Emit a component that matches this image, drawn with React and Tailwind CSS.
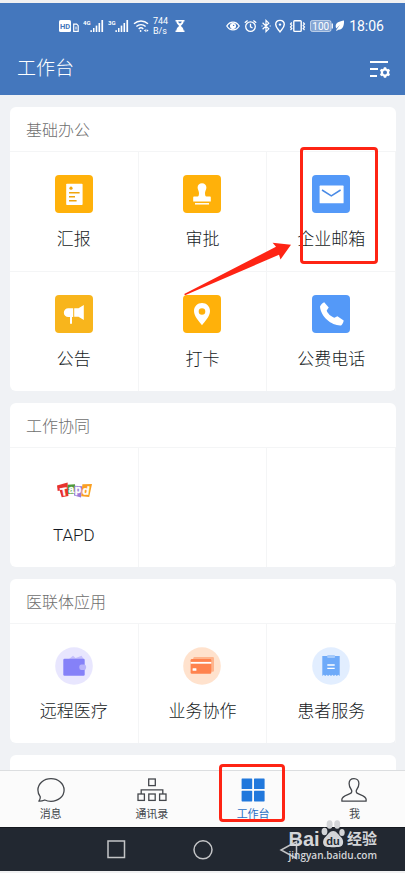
const BASE_APPS = [
  { name: '汇报', icon: ReportIcon },
  { name: '审批', icon: StampIcon },
  { name: '企业邮箱', icon: MailIcon, marked: true },
  { name: '公告', icon: HornIcon },
  { name: '打卡', icon: PinIcon },
  { name: '公费电话', icon: PhoneIcon },
]

const TEAM_APPS = [{ name: 'TAPD', icon: TapdIcon }, null, null]

const MEDICAL_APPS = [
  { name: '远程医疗', icon: WalletIcon },
  { name: '业务协作', icon: CardsIcon },
  { name: '患者服务', icon: ReceiptIcon },
]

const TABS = [
  { name: '消息', icon: ChatIcon },
  { name: '通讯录', icon: ContactsIcon },
  { name: '工作台', icon: GridIcon, active: true },
  { name: '我', icon: MeIcon },
]

function Tile({ color, children }) {
  return (
    <svg viewBox="0 0 38 38" className="size-[38px]" aria-hidden="true">
      <rect width="38" height="38" rx="4" fill={color} />
      {children}
    </svg>
  )
}

function Disc({ color, children }) {
  return (
    <svg viewBox="0 0 38 38" className="size-[38px]" aria-hidden="true">
      <circle cx="19" cy="19" r="18.8" fill={color} />
      {children}
    </svg>
  )
}

function ReportIcon() {
  return (
    <Tile color="#ffb10a">
      <rect x="11.2" y="8.8" width="16.4" height="21.2" rx="0.8" fill="#fff" />
      <circle cx="16" cy="13.2" r="1.6" fill="#f0a50c" />
      <path d="M14 17.8h10.6M14 21.7h6M14 25.7h7.6" stroke="#f0a50c" strokeWidth="1.4" />
    </Tile>
  )
}

function StampIcon() {
  return (
    <Tile color="#ffb10a">
      <path
        d="M19 8.2c-2.6 0-4.4 1.9-4.4 4.3 0 2 1.4 3.6 1.4 5.6 0 1.8-.3 3.5-1.4 3.5h-3.400c-.6 0-1 .4-1 1v3.900h17.600v-3.900c0-.6-.4-1-1-1h-3.400c-1.100 0-1.400-1.700-1.400-3.500 0-2 1.400-3.600 1.400-5.600 0-2.400-1.800-4.300-4.400-4.300z"
        fill="#fff"
      />
      <path d="M12 28.800h14" stroke="#fff" strokeWidth="1.5" />
    </Tile>
  )
}

function MailIcon() {
  return (
    <Tile color="#5499f8">
      <rect x="7.6" y="10.6" width="24" height="17.7" rx="0.6" fill="#fff" />
      <path d="M10 15l9.300 5.800 9.300-5.800" stroke="#4a8be6" strokeWidth="1.5" fill="none" />
    </Tile>
  )
}

function HornIcon() {
  return (
    <Tile color="#f8b51c">
      <path d="M13.200 13.300h5v8.700h-1.200v6.800h-2v-6.800h-1.800a4.350 4.350 0 0 1 0-8.700z" fill="#fff" />
      <path d="M19.200 13.300h4.300l5.300-3.400v15.200l-5.300-3.300h-4.300z" fill="#fff" />
    </Tile>
  )
}

function PinIcon() {
  return (
    <Tile color="#ffb10a">
      <path
        d="M19 8c-4.500 0-8 3.500-8 8 0 5.500 5.300 10.500 8 14.200 2.700-3.700 8-8.700 8-14.200 0-4.500-3.500-8-8-8zm0 5.200a3.300 3.300 0 1 1 0 6.600 3.300 3.300 0 0 1 0-6.600z"
        fill="#fff"
        fillRule="evenodd"
      />
    </Tile>
  )
}

function PhoneIcon() {
  return (
    <Tile color="#5499f8">
      <path
        d="M12.200 7.200l4.500 5.400-2 3c.8 3 4.500 6.300 7.700 7.200l3-1.600 6.300 4.200c-.3 2-1.200 3.800-2.600 5-9 .6-20.300-8.300-21.100-18.900.9-1.800 2.300-3.300 4.200-4.300z"
        fill="#fff"
      />
    </Tile>
  )
}

function TapdIcon() {
  return (
    <svg viewBox="0 0 38 38" className="size-[38px]" aria-hidden="true">
      <path d="M2 14.400l10.600-2.800.8 13.400-6.700 1.300-2-6.800-2 .4z" fill="#e8332c" />
      <path d="M12.600 13.800l7.400-.6.400 9.300-7.200.4z" fill="#4d9a3b" />
      <path d="M19.400 14.800l8 .4-1.400 11.400-7-2z" fill="#9b7ad8" />
      <path d="M27.400 13.200l9.600-.2-2.800 13-8-.8z" fill="#fa9f22" />
      <g
        fill="#fff"
        stroke="#fff"
        strokeWidth="0.4"
        fontFamily="'Liberation Sans', sans-serif"
        fontWeight="700"
        textAnchor="middle"
      >
        <text x="8.7" y="24.400" fontSize="11" transform="rotate(-10 8.7 20)">T</text>
        <text x="16.400" y="21.600" fontSize="10">a</text>
        <text x="23" y="22" fontSize="10.500">p</text>
        <text x="31.200" y="23.600" fontSize="11.500" transform="rotate(8 31 19)">d</text>
      </g>
    </svg>
  )
}

function WalletIcon() {
  return (
    <Disc color="#e8e6fe">
      <path d="M14 12l4-3.200 2.600 2.200 6-2.300 2 3.300z" fill="#c4bffc" />
      <rect x="8.300" y="11.700" width="21.400" height="17" rx="1.200" fill="#8581f8" />
      <rect x="24.300" y="17.600" width="6.800" height="5.400" rx="2.200" fill="#b9b4fb" />
    </Disc>
  )
}

function CardsIcon() {
  return (
    <Disc color="#ffe2cd">
      <rect x="10.300" y="10" width="20.700" height="14.800" rx="1.200" fill="#ffb48c" />
      <rect x="7.600" y="12" width="20.700" height="14.800" rx="1.200" fill="#ff834e" />
      <path d="M7.600 15.800h20.700" stroke="#fff" strokeWidth="1.800" />
      <rect x="9.600" y="21.200" width="3.800" height="2.600" rx="0.400" fill="#fff" />
    </Disc>
  )
}

function ReceiptIcon() {
  return (
    <Disc color="#e2eeff">
      <path
        d="M10.300 9h17.400v20l-1.450-1.200-1.450 1.200-1.450-1.200-1.450 1.200-1.450-1.200-1.450 1.200-1.450-1.200-1.450 1.200-1.450-1.200-1.450 1.200-1.450-1.200-1.450 1.200z"
        fill="#6eaaf9"
      />
      <rect x="15.200" y="8" width="7.800" height="3" rx="0.800" fill="#a5cafb" />
      <path d="M15.300 18h7.400M15.300 21.300h7.400" stroke="#fff" strokeWidth="1.300" />
    </Disc>
  )
}

function ChatIcon() {
  return (
    <svg viewBox="0 0 30 26" className="h-[26px] w-[30px]" fill="none" stroke="currentColor" strokeWidth="1.300">
      <path d="M4.300 19.800C2.700 17.900 1.900 15.600 1.900 13 1.900 6.600 7.700 1.600 15 1.600S28.100 6.600 28.100 13 22.300 24.300 15 24.300c-2.300 0-4.300-.4-6.200-1.300-1.800.8-3.800 1.300-5.900 1.200 1-1.300 1.500-2.800 1.400-4.400z" strokeLinejoin="round" />
    </svg>
  )
}

function ContactsIcon() {
  return (
    <svg viewBox="0 0 30 26" className="h-[26px] w-[30px]" fill="none" stroke="currentColor" strokeWidth="1.300">
      <rect x="11.700" y="2" width="6.600" height="6.600" />
      <path d="M4.200 17v-4.200h21.600V17" />
      <rect x="1" y="17" width="6.400" height="6.400" />
      <rect x="11.800" y="17" width="6.400" height="6.400" />
      <rect x="22.600" y="17" width="6.400" height="6.400" />
    </svg>
  )
}

function GridIcon() {
  return (
    <svg viewBox="0 0 30 26" className="h-[26px] w-[30px]" fill="#2178dc">
      <rect x="3.600" y="1.500" width="10.600" height="10.600" rx="0.600" />
      <rect x="16" y="1.500" width="10.600" height="10.600" rx="0.600" />
      <rect x="3.600" y="13.800" width="10.600" height="10.600" rx="0.600" />
      <rect x="16" y="13.800" width="10.600" height="10.600" rx="0.600" />
    </svg>
  )
}

function MeIcon() {
  return (
    <svg viewBox="0 0 30 26" className="h-[26px] w-[30px]" fill="none" stroke="currentColor" strokeWidth="1.300">
      <path d="M15 1.600c-3 0-4.900 2-4.900 5 0 2.500.8 4.400 2.100 5.900.9 1.100.8 3.200-.7 3.900-3.400 1.700-8.600 2.800-8.600 5.900v1.900h24.200v-1.900c0-3.100-5.200-4.200-8.600-5.900-1.500-.7-1.600-2.800-.7-3.900 1.300-1.500 2.100-3.400 2.100-5.900 0-3-1.900-5-4.900-5z" strokeLinejoin="round" />
    </svg>
  )
}

function Signal({ label }) {
  return (
    <svg viewBox="0 0 21 14" className="h-3.5 w-[21px]" fill="#fff">
      <text x="0" y="5.500" fontSize="6" fontWeight="700" fontFamily="Roboto, sans-serif">{label}</text>
      <rect x="7.400" y="11.200" width="1.500" height="1.800" />
      <rect x="10" y="9" width="1.500" height="4" />
      <rect x="12.700" y="6.600" width="1.600" height="6.400" />
      <rect x="15.500" y="4" width="1.600" height="9" />
      <rect x="18.400" y="1" width="1.700" height="12" />
    </svg>
  )
}

function StatusBar() {
  return (
    <div className="flex h-[46px] items-center justify-between pr-[21px] pl-[59px] text-white">
      <div className="flex items-center gap-1">
        <svg viewBox="0 0 20 14" className="h-3.5 w-5">
          <rect x="0" y="1" width="12" height="12" rx="1.500" fill="#fff" />
          <text x="6" y="9.800" fontSize="7.500" fontWeight="700" textAnchor="middle" fill="#4477bd" fontFamily="Roboto, sans-serif">HD</text>
          <path d="M14.700 5.200h3l1.500 1.500v5.700h-4.500z" fill="none" stroke="#fff" strokeWidth="1.200" />
          <path d="M17 7.500v3" stroke="#fff" strokeWidth="1" />
        </svg>
        <Signal label="4G" />
        <Signal label="3G" />
        <svg viewBox="0 0 16 14" className="h-3.5 w-4" fill="none" stroke="#fff" strokeWidth="1.400">
          <path d="M1 4.800c4-3.700 10-3.700 14 0M3.400 7.400c2.600-2.400 6.600-2.400 9.200 0M5.700 9.900c1.300-1.200 3.300-1.200 4.600 0" />
          <circle cx="7.600" cy="12" r="0.900" fill="#fff" stroke="none" />
          <path d="M10.800 11.600l2-1.300v2.600zM15.600 11.600l-2-1.300v2.600z" fill="#fff" stroke="none" />
        </svg>
        <div className="text-[9px] leading-[10px]">
          <div>744</div>
          <div>B/s</div>
        </div>
        <svg viewBox="0 0 16 14" className="h-3.5 w-4" fill="#fff">
          <path d="M3.500 1h9v1.600h-.9c0 2-1.600 3.400-2.800 4.400 1.200 1 2.800 2.400 2.800 4.400h.9V13h-9v-1.600h.9c0-2 1.600-3.400 2.800-4.400-1.200-1-2.800-2.400-2.800-4.400h-.9z" />
          <path d="M6.200 2.600h3.600c-.2.8-.6 1.300-1 1.700H7.200c-.4-.4-.8-.9-1-1.700z" fill="#4477bd" />
        </svg>
      </div>

      <div className="flex items-center gap-1">
        <svg viewBox="0 0 14 14" className="size-3.5" fill="none" stroke="#fff" strokeWidth="1.300">
          <path d="M.8 7c3-5.200 9.400-5.200 12.400 0-3 5.200-9.400 5.200-12.400 0z" />
          <circle cx="7" cy="7" r="2.400" fill="#fff" />
          <circle cx="7.600" cy="6.400" r="0.700" fill="#4477bd" stroke="none" />
        </svg>
        <svg viewBox="0 0 13 14" className="h-3.5 w-[13px]" fill="none" stroke="#fff" strokeWidth="1.300">
          <circle cx="6.500" cy="7.600" r="4.800" />
          <path d="M6.500 4.800v3l2 1.200M.8 3.800L3.600 1.400M12.200 3.800L9.400 1.400" />
        </svg>
        <svg viewBox="0 0 10 14" className="h-3.5 w-2.5" fill="none" stroke="#fff" strokeWidth="1.200">
          <path d="M1.600 3.800l6.200 6L5 12.600V1.400l2.800 2.800-6.200 6M.4 7h1.200M8.600 7h1.200" />
        </svg>
        <svg viewBox="0 0 10 14" className="h-3.5 w-2.5" fill="none" stroke="#fff" strokeWidth="1.400">
          <path d="M5 1.400c-2.500 0-4.300 1.800-4.300 4.200C.7 8.400 3.500 10.600 5 12.800c1.500-2.200 4.300-4.400 4.300-7.200 0-2.400-1.800-4.200-4.300-4.200z" />
          <circle cx="5" cy="5.600" r="1.200" fill="#fff" stroke="none" />
        </svg>
        <svg viewBox="0 0 17 14" className="h-3.5 w-[17px]" fill="none" stroke="#fff" strokeWidth="1.400">
          <rect x="4.800" y="1.800" width="7.400" height="10.600" rx="0.800" />
          <path d="M2.800 3.500L1.500 5l1.300 1.500L1.500 8l1.300 1.500L1.500 11M14.200 3.500L15.500 5l-1.300 1.500L15.500 8l-1.300 1.500 1.300 1.500" strokeWidth="1.200" />
        </svg>
        <svg viewBox="0 0 35 14" className="h-3.5 w-[35px]">
          <rect x="0.500" y="1.500" width="20.500" height="11" rx="1.800" fill="#fff" fillOpacity="0.350" stroke="#fff" strokeOpacity="0.700" strokeWidth="0.800" />
          <text x="10.800" y="10.900" fontSize="10" textAnchor="middle" fill="#fff" fontFamily="Roboto, sans-serif">100</text>
          <rect x="21.600" y="4.500" width="1.300" height="5" fill="#fff" />
          <path d="M34 1.500c-4.500.7-8.500 2.200-8.300 6 0 .8.300 1.500.7 2.100l3.600-3.800-3.900 5.400.8.800 1-1.300c4.800.6 6.400-4 6.100-9.200z" fill="#fff" />
        </svg>
        <time className="text-[14px] leading-4">18:06</time>
      </div>
    </div>
  )
}

function Header() {
  return (
    <header className="border-t-3 border-[#f1f1f2] bg-[#4477bd]">
      <StatusBar />
      <div className="flex h-[46px] items-center justify-between pr-3.5 pb-1.5 pl-[17px]">
        <h1 className="text-[19px] leading-7 font-light text-white">工作台</h1>
        <button type="button" aria-label="设置">
          <svg viewBox="0 0 22 18" className="h-[18px] w-[22px]" fill="none" stroke="#fff">
            <path d="M1 2h18M1 9h8M1 16h7" strokeWidth="2.200" />
            <circle cx="16" cy="12.500" r="3.100" strokeWidth="2.200" />
            <path
              d="M16 7.300v1.900M16 15.800v1.900M11.500 9.900l1.700 1M18.800 14.100l1.700 1M11.500 15.100l1.700-1M18.800 10.900l1.700-1"
              strokeWidth="2.400"
            />
          </svg>
        </button>
      </div>
    </header>
  )
}

function Section({ title, apps, children }) {
  return (
    <section className="rounded-md bg-white">
      <h2 className="h-11 px-4 pt-3 text-[16px] leading-6 font-light text-[#6e6e6e]">{title}</h2>
      <div className="relative grid grid-cols-3">
        {apps.map((app, i) => (
          <div key={i} className="relative h-[120px] border-t border-r border-[#f4f5f6]">
            {app && (
              <button type="button" className="flex w-full flex-col items-center gap-3.5 pt-[23px]">
                <app.icon />
                <span className="text-[17px] leading-6 font-light text-[#151a23]">{app.name}</span>
              </button>
            )}
            {app?.marked && (
              <div className="absolute -top-[5px] left-[33px] h-[117px] w-[78px] rounded-sm border-3 border-[#fe2414]" />
            )}
          </div>
        ))}
        {children}
      </div>
    </section>
  )
}

function Arrow() {
  return (
    <svg viewBox="0 0 108 54" className="absolute top-[91px] left-[45%] h-[54px] w-[108px]" aria-hidden="true">
      <path d="M.2 52L92 4.800 88.600.7 107 2.700 96.500 17.500 95 12.700 1 53.300z" fill="#fe2414" />
    </svg>
  )
}

function TabBar() {
  return (
    <nav className="grid h-[57px] grid-cols-4 border-t border-[#dcdee0] bg-[#fbfbfb]">
      {TABS.map((tab) => (
        <a
          key={tab.name}
          href="#"
          className={`relative flex flex-col items-center gap-1 pt-1.5 ${
            tab.active ? 'text-[#2a6fc4]' : 'text-[#44474c]'
          }`}
        >
          <tab.icon />
          <span className="text-[11px] leading-4">{tab.name}</span>
          {tab.active && (
            <span className="absolute -top-[7px] left-4 h-[58px] w-[66px] rounded-sm border-3 border-[#fe2414]" />
          )}
        </a>
      ))}
    </nav>
  )
}

function Watermark() {
  return (
    <div className="absolute right-7 bottom-2.5 text-[#d3d5d8]">
      <div className="flex items-end justify-between">
        <span className="font-['Liberation_Sans'] text-[20px] leading-5 font-bold">Bai</span>
        <svg viewBox="0 0 24 30" className="h-[30px] w-6" fill="#d3d5d8">
          <ellipse cx="3.500" cy="12.500" rx="2.900" ry="3.700" />
          <ellipse cx="8.600" cy="5.500" rx="3" ry="4.200" />
          <ellipse cx="16.200" cy="5.500" rx="3" ry="4.200" />
          <ellipse cx="21" cy="13.500" rx="2.700" ry="3.600" />
          <path d="M12.200 12c3.400 0 5 3.700 7.700 6 3.300 2.900 3.300 9.500-2 10-2.400.2-8.800.2-11.400 0-5.300-.5-5.600-6.800-2.100-10 2.600-2.400 4.400-6 7.800-6z" />
          <text x="12" y="26.300" fontSize="11" fontWeight="700" textAnchor="middle" fill="#222831" fontFamily="'Liberation Sans', sans-serif">du</text>
        </svg>
        <span className="text-[15px] leading-5 font-bold">经验</span>
      </div>
      <div className="font-['Open_Sans'] text-[10px] leading-3 font-semibold">jingyan.baidu.com</div>
    </div>
  )
}

function SystemBar() {
  return (
    <footer className="relative border-t border-b-2 border-t-[#15191f] border-b-[#f1f1f2] bg-[#222831]">
      <div className="flex h-[43px] items-center justify-center gap-[66px]">
        <button type="button" aria-label="最近任务">
          <svg viewBox="0 0 20 20" className="size-5" fill="none" stroke="#c4c5c7" strokeWidth="1.500">
            <rect x="1" y="1" width="16.500" height="16.500" />
          </svg>
        </button>
        <button type="button" aria-label="主页">
          <svg viewBox="0 0 20 20" className="size-5" fill="none" stroke="#c4c5c7" strokeWidth="1.500">
            <circle cx="10" cy="9.800" r="9" />
          </svg>
        </button>
        <button type="button" aria-label="返回">
          <svg viewBox="0 0 20 20" className="size-5" fill="none" stroke="#c4c5c7" strokeWidth="1.500">
            <path d="M17.500 1.500v17L2 10z" />
          </svg>
        </button>
      </div>
      <Watermark />
    </footer>
  )
}

export default function App() {
  return (
    <div className="flex h-screen flex-col bg-[#f0f2f5] font-[Roboto,'Noto_Sans_CJK_SC',sans-serif]">
      <Header />
      <main className="flex min-h-0 flex-1 flex-col gap-3 overflow-hidden pt-3 pr-[9px] pl-2.5">
        <Section title="基础办公" apps={BASE_APPS}>
          <Arrow />
        </Section>
        <Section title="工作协同" apps={TEAM_APPS} />
        <Section title="医联体应用" apps={MEDICAL_APPS} />
        <section className="h-11 shrink-0 rounded-md bg-white" />
      </main>
      <TabBar />
      <SystemBar />
    </div>
  )
}
